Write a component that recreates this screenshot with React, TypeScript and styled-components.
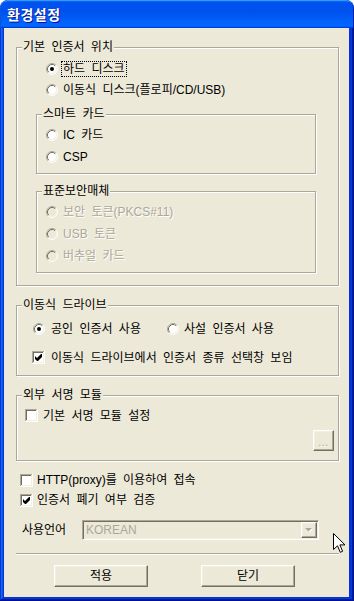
import React from "react";
import styled, { createGlobalStyle } from "styled-components";

const GlobalStyle = createGlobalStyle`
  html, body {
    margin: 0;
    padding: 0;
    background: #ffffff;
  }
  body {
    font-family: "Liberation Sans", "Noto Sans CJK KR", sans-serif;
    font-size: 12px;
    color: #000;
  }
`;

// 윈도우 XP 클래식 색상
const FACE = "#ECE9D8";
const SHADOW = "#ACA899";
const DARK = "#716F64";
const LIGHT = "#F1EFE2";
const UI_FONT = `"Liberation Sans", "Noto Sans CJK KR", sans-serif`;

const RadioIcon = ({ checked, disabled }: { checked?: boolean; disabled?: boolean }) => (
  <svg width="12" height="12" viewBox="0 0 12 12" style={{ flexShrink: 0 }}>
    <circle cx="6" cy="6" r="5" fill={disabled ? FACE : "#fff"} />
    <path d="M2.11 9.89 A5.5 5.5 0 0 1 9.89 2.11" fill="none" stroke={SHADOW} />
    <path d="M9.89 2.11 A5.5 5.5 0 0 1 2.11 9.89" fill="none" stroke="#fff" />
    <path d="M2.82 9.18 A4.5 4.5 0 0 1 9.18 2.82" fill="none" stroke={DARK} />
    <path d="M9.18 2.82 A4.5 4.5 0 0 1 2.82 9.18" fill="none" stroke={LIGHT} />
    {checked && <circle cx="6" cy="6" r="2" fill={disabled ? SHADOW : "#000"} />}
  </svg>
);

const CheckIcon = ({ checked }: { checked?: boolean }) => (
  <svg width="13" height="13" viewBox="0 0 13 13" style={{ flexShrink: 0 }}>
    <rect x="0" y="0" width="13" height="13" fill="#fff" />
    <rect x="0" y="0" width="12" height="1" fill={SHADOW} />
    <rect x="0" y="0" width="1" height="12" fill={SHADOW} />
    <rect x="1" y="1" width="10" height="1" fill={DARK} />
    <rect x="1" y="1" width="1" height="10" fill={DARK} />
    <rect x="1" y="11" width="11" height="1" fill={LIGHT} />
    <rect x="11" y="1" width="1" height="11" fill={LIGHT} />
    {checked && <path d="M3 5 L5 7 L9 3 L10 3 L10 6 L6 10 L5 10 L3 8 Z" fill="#000" />}
  </svg>
);

const Cursor = () => (
  <svg width="13" height="21" viewBox="0 0 13 21">
    <path
      d="M0.5 0.5 L0.5 16.5 L4.5 12.8 L7.3 19.3 L9.6 18.3 L6.9 11.9 L12 11.9 Z"
      fill="#fff"
      stroke="#000"
      strokeLinejoin="miter"
    />
  </svg>
);

const Option = ({
  kind,
  label,
  checked,
  disabled,
  focus,
  gap = 4,
  width,
}: {
  kind: "radio" | "check";
  label: string;
  checked?: boolean;
  disabled?: boolean;
  focus?: boolean;
  gap?: number;
  width?: number;
}) => (
  <OptionWrap $gap={gap} $w={width}>
    {kind === "radio" ? <RadioIcon checked={checked} disabled={disabled} /> : <CheckIcon checked={checked} />}
    <OptionText $disabled={disabled} $focus={focus}>
      {label}
    </OptionText>
  </OptionWrap>
);

const App = () => {
  return (
    <>
      <GlobalStyle />
      <Window>
        <TitleBar>
          <Title>환경설정</Title>
        </TitleBar>
        <Frame>
          <Client>
            <Group $w={323}>
              <Legend>기본 인증서 위치</Legend>
              <Row $mt={3} $ml={29}>
                <Option kind="radio" label="하드 디스크" checked focus />
              </Row>
              <Row $ml={29}>
                <Option kind="radio" label="이동식 디스크(플로피/CD/USB)" />
              </Row>

              <Group $w={280} $mt={7} $ml={19} $pb={5}>
                <Legend>스마트 카드</Legend>
                <Row $h={22} $mt={2} $ml={9}>
                  <Option kind="radio" label="IC 카드" />
                </Row>
                <Row $h={22} $ml={9}>
                  <Option kind="radio" label="CSP" />
                </Row>
              </Group>

              <Group $w={280} $mt={10} $ml={19} $pb={5}>
                <Legend>표준보안매체</Legend>
                <Row $h={22} $mt={2} $ml={9}>
                  <Option kind="radio" label="보안 토큰(PKCS#11)" disabled />
                </Row>
                <Row $h={22} $ml={9}>
                  <Option kind="radio" label="USB 토큰" disabled />
                </Row>
                <Row $h={22} $ml={9}>
                  <Option kind="radio" label="버추얼 카드" disabled />
                </Row>
              </Group>
              <Spacer $h={12} />
            </Group>

            <Group $w={323} $mt={12} $pb={7}>
              <Legend>이동식 드라이브</Legend>
              <Row $mt={5} $ml={16}>
                <Option kind="radio" label="공인 인증서 사용" checked gap={5} width={134} />
                <Option kind="radio" label="사설 인증서 사용" gap={4} />
              </Row>
              <Row $mt={8} $ml={15}>
                <Option kind="check" label="이동식 드라이브에서 인증서 종류 선택창 보임" checked gap={5} />
              </Row>
            </Group>

            <Group $w={323} $mt={12} $pb={9}>
              <Legend>외부 서명 모듈</Legend>
              <Row $mt={2} $ml={8}>
                <Option kind="check" label="기본 서명 모듈 설정" />
              </Row>
              <ButtonRow>
                <SmallButton>...</SmallButton>
              </ButtonRow>
            </Group>

            <Row $h={20} $mt={9} $ml={4}>
              <Option kind="check" label="HTTP(proxy)를 이용하여 접속" gap={3} />
            </Row>
            <Row $h={20} $ml={4}>
              <Option kind="check" label="인증서 폐기 여부 검증" checked gap={3} />
            </Row>

            <LangRow>
              <LangLabel>사용언어</LangLabel>
              <Combo>
                <ComboText>KOREAN</ComboText>
                <ComboButton>
                  <svg width="8" height="5" viewBox="0 0 8 5">
                    <path d="M1 1 H8 L4.5 4.5 Z" fill="#fff" />
                    <path d="M0 0 H7 L3.5 3.5 Z" fill={SHADOW} />
                  </svg>
                </ComboButton>
              </Combo>
            </LangRow>

            <Separator />

            <Footer>
              <PushButton>적용</PushButton>
              <PushButton>닫기</PushButton>
            </Footer>
          </Client>
        </Frame>
        <CursorLayer>
          <Cursor />
        </CursorLayer>
      </Window>
    </>
  );
};

export default App;

const Window = styled.div`
  position: relative;
  width: 354px;
  height: 601px;
  display: flex;
  flex-direction: column;
  overflow: hidden;
  border-radius: 8px 8px 0 0;
  background: #0831d9;
  font-family: ${UI_FONT};
`;

const TitleBar = styled.div`
  height: 28px;
  flex-shrink: 0;
  display: flex;
  align-items: center;
  padding-left: 7px;
  border-radius: 8px 8px 0 0;
  background: linear-gradient(
    180deg,
    #0997ff,
    #0053ee 8%,
    #0050ee 40%,
    #06f 88%,
    #06f 93%,
    #005bff 95%,
    #003dd7 96%,
    #003dd7
  );
  box-shadow: inset 0 1px #3d95ff, inset 1px 0 #0855dd, inset -1px 0 #001ea0;
`;

const Title = styled.span`
  font-family: "Noto Sans CJK KR", "Noto Sans", sans-serif;
  font-size: 14px;
  font-weight: 700;
  line-height: 16px;
  color: #ffffff;
  text-shadow: 1px 1px #0f1089;
  letter-spacing: 0.5px;
`;

const Frame = styled.div`
  flex: 1;
  display: flex;
  padding: 0 5px 4px 4px;
  background: #0831d9;
  box-shadow: inset -1px -1px #00138c, inset 1px 0 #0831d9, inset -2px -2px #001ea0,
    inset 2px 0 #166aee, inset -3px -3px #003bda, inset 3px 0 #0855dd;
`;

const Client = styled.div`
  flex: 1;
  display: flex;
  flex-direction: column;
  background: ${FACE};
  padding: 12px 0 0 12px;
`;

const Group = styled.fieldset<{ $w: number; $mt?: number; $ml?: number; $pb?: number }>`
  display: block;
  box-sizing: border-box;
  width: ${(p) => p.$w}px;
  min-width: 0;
  margin: ${(p) => p.$mt ?? 0}px 0 0 ${(p) => p.$ml ?? 0}px;
  padding: 0 0 ${(p) => p.$pb ?? 0}px 0;
  border: 1px solid ${SHADOW};
  box-shadow: inset 1px 1px 0 #fff, 1px 1px 0 #fff;
`;

const Legend = styled.legend`
  margin-left: 5px;
  padding: 0 1px;
  font-size: 12px;
  line-height: 15px;
  color: #000;
  background: ${FACE};
  word-spacing: 3px;
`;

const Row = styled.div<{ $h?: number; $mt?: number; $ml?: number }>`
  display: flex;
  align-items: center;
  height: ${(p) => p.$h ?? 21}px;
  margin-top: ${(p) => p.$mt ?? 0}px;
  margin-left: ${(p) => p.$ml ?? 0}px;
`;

const Spacer = styled.div<{ $h: number }>`
  height: ${(p) => p.$h}px;
`;

const OptionWrap = styled.label<{ $gap: number; $w?: number }>`
  display: inline-flex;
  align-items: center;
  gap: ${(p) => p.$gap}px;
  width: ${(p) => (p.$w ? `${p.$w}px` : "auto")};
  flex-shrink: 0;
`;

const OptionText = styled.span<{ $disabled?: boolean; $focus?: boolean }>`
  font-size: 12px;
  line-height: 14px;
  white-space: nowrap;
  word-spacing: 3px;
  color: ${(p) => (p.$disabled ? SHADOW : "#000")};
  text-shadow: ${(p) => (p.$disabled ? "1px 1px #fff" : "none")};
  outline: ${(p) => (p.$focus ? "1px dotted #000" : "none")};
  outline-offset: 0;
  padding: 0 1px;
`;

const ButtonRow = styled.div`
  display: flex;
  justify-content: flex-end;
  margin-top: 4px;
  padding-right: 4px;
`;

const raised = `
  box-sizing: border-box;
  background: ${FACE};
  border: 1px solid;
  border-color: #fff ${DARK} ${DARK} #fff;
  box-shadow: inset -1px -1px ${SHADOW}, inset 1px 1px ${LIGHT};
`;

const SmallButton = styled.div`
  ${raised}
  width: 21px;
  height: 21px;
  display: flex;
  align-items: flex-end;
  justify-content: center;
  padding-bottom: 4px;
  font-size: 11px;
  line-height: 8px;
  letter-spacing: 0.5px;
  color: ${SHADOW};
  text-shadow: 1px 1px #fff;
`;

const LangRow = styled.div`
  display: flex;
  align-items: center;
  height: 20px;
  margin-top: 10px;
  margin-left: 6px;
`;

const LangLabel = styled.span`
  width: 60px;
  font-size: 12px;
  line-height: 14px;
  color: #000;
`;

const Combo = styled.div`
  box-sizing: border-box;
  width: 237px;
  height: 20px;
  display: flex;
  align-items: center;
  padding: 1px;
  border: 1px solid;
  border-color: ${SHADOW} #fff #fff ${SHADOW};
  box-shadow: inset 1px 1px ${DARK}, inset -1px -1px ${LIGHT};
  background: ${FACE};
`;

const ComboText = styled.span`
  flex: 1;
  padding-left: 2px;
  font-size: 12px;
  line-height: 14px;
  color: ${SHADOW};
`;

const ComboButton = styled.div`
  ${raised}
  width: 16px;
  height: 16px;
  display: flex;
  align-items: center;
  justify-content: center;
`;

const Separator = styled.div`
  width: 323px;
  height: 1px;
  margin-top: 13px;
  background: ${SHADOW};
  border-bottom: 1px solid #fff;
`;

const Footer = styled.div`
  display: flex;
  gap: 53px;
  margin-top: 10px;
  padding-left: 38px;
`;

const PushButton = styled.div`
  ${raised}
  width: 94px;
  height: 22px;
  display: flex;
  align-items: center;
  justify-content: center;
  font-size: 12px;
  line-height: 14px;
  color: #000;
`;

const CursorLayer = styled.div`
  position: absolute;
  left: 333px;
  top: 533px;
  line-height: 0;
`;
